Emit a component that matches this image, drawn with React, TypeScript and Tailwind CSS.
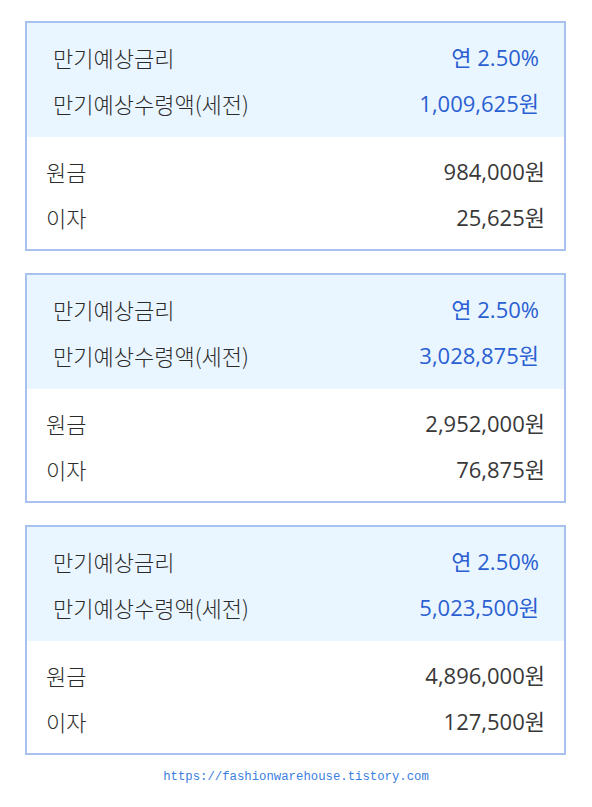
import React from "react";

type Card = { amount: string; principal: string; interest: string };

const cards: Card[] = [
  { amount: "1,009,625원", principal: "984,000원", interest: "25,625원" },
  { amount: "3,028,875원", principal: "2,952,000원", interest: "76,875원" },
  { amount: "5,023,500원", principal: "4,896,000원", interest: "127,500원" },
];

const font = { fontFamily: '"Noto Sans CJK KR", "Noto Sans", sans-serif' };
const numFont = { fontFamily: '"Open Sans", "Noto Sans CJK KR", sans-serif' };

function ResultCard({ c }: { c: Card }) {
  return (
    <div className="w-[541px] border-2 border-[#a9c1ee] bg-white">
      <div className="bg-[#eaf6ff] pl-[26px] pr-[25px] pt-[11px] pb-[11px]">
        <div className="flex h-[46px] items-center justify-between">
          <span className="text-[#2b2b2b]">만기예상금리</span>
          <span className="font-normal text-[#2a5fd2]" style={numFont}>연 2.50%</span>
        </div>
        <div className="flex h-[46px] items-center justify-between">
          <span className="text-[#2b2b2b]">만기예상수령액(세전)</span>
          <span className="font-normal text-[#2a5fd2]" style={numFont}>{c.amount}</span>
        </div>
      </div>
      <div className="px-[19px] pt-[11px] pb-[9px]">
        <div className="flex h-[46px] items-center justify-between">
          <span className="text-[#2b2b2b]">원금</span>
          <span className="font-normal text-[#383838]" style={numFont}>{c.principal}</span>
        </div>
        <div className="flex h-[46px] items-center justify-between">
          <span className="text-[#2b2b2b]">이자</span>
          <span className="font-normal text-[#383838]" style={numFont}>{c.interest}</span>
        </div>
      </div>
    </div>
  );
}

export default function App() {
  return (
    <div className="min-h-[807px] w-[592px] bg-white pt-[21px] text-[22px] font-light leading-none" style={font}>
      <div className="flex flex-col gap-[22px] pl-[25px]">
        {cards.map((c, i) => (
          <ResultCard key={i} c={c} />
        ))}
      </div>
      <div
        className="mt-[16px] text-center text-[12.3px] font-normal text-[#3a7ee0]"
        style={{ fontFamily: '"Liberation Mono", monospace' }}
      >
        https://fashionwarehouse.tistory.com
      </div>
    </div>
  );
}
